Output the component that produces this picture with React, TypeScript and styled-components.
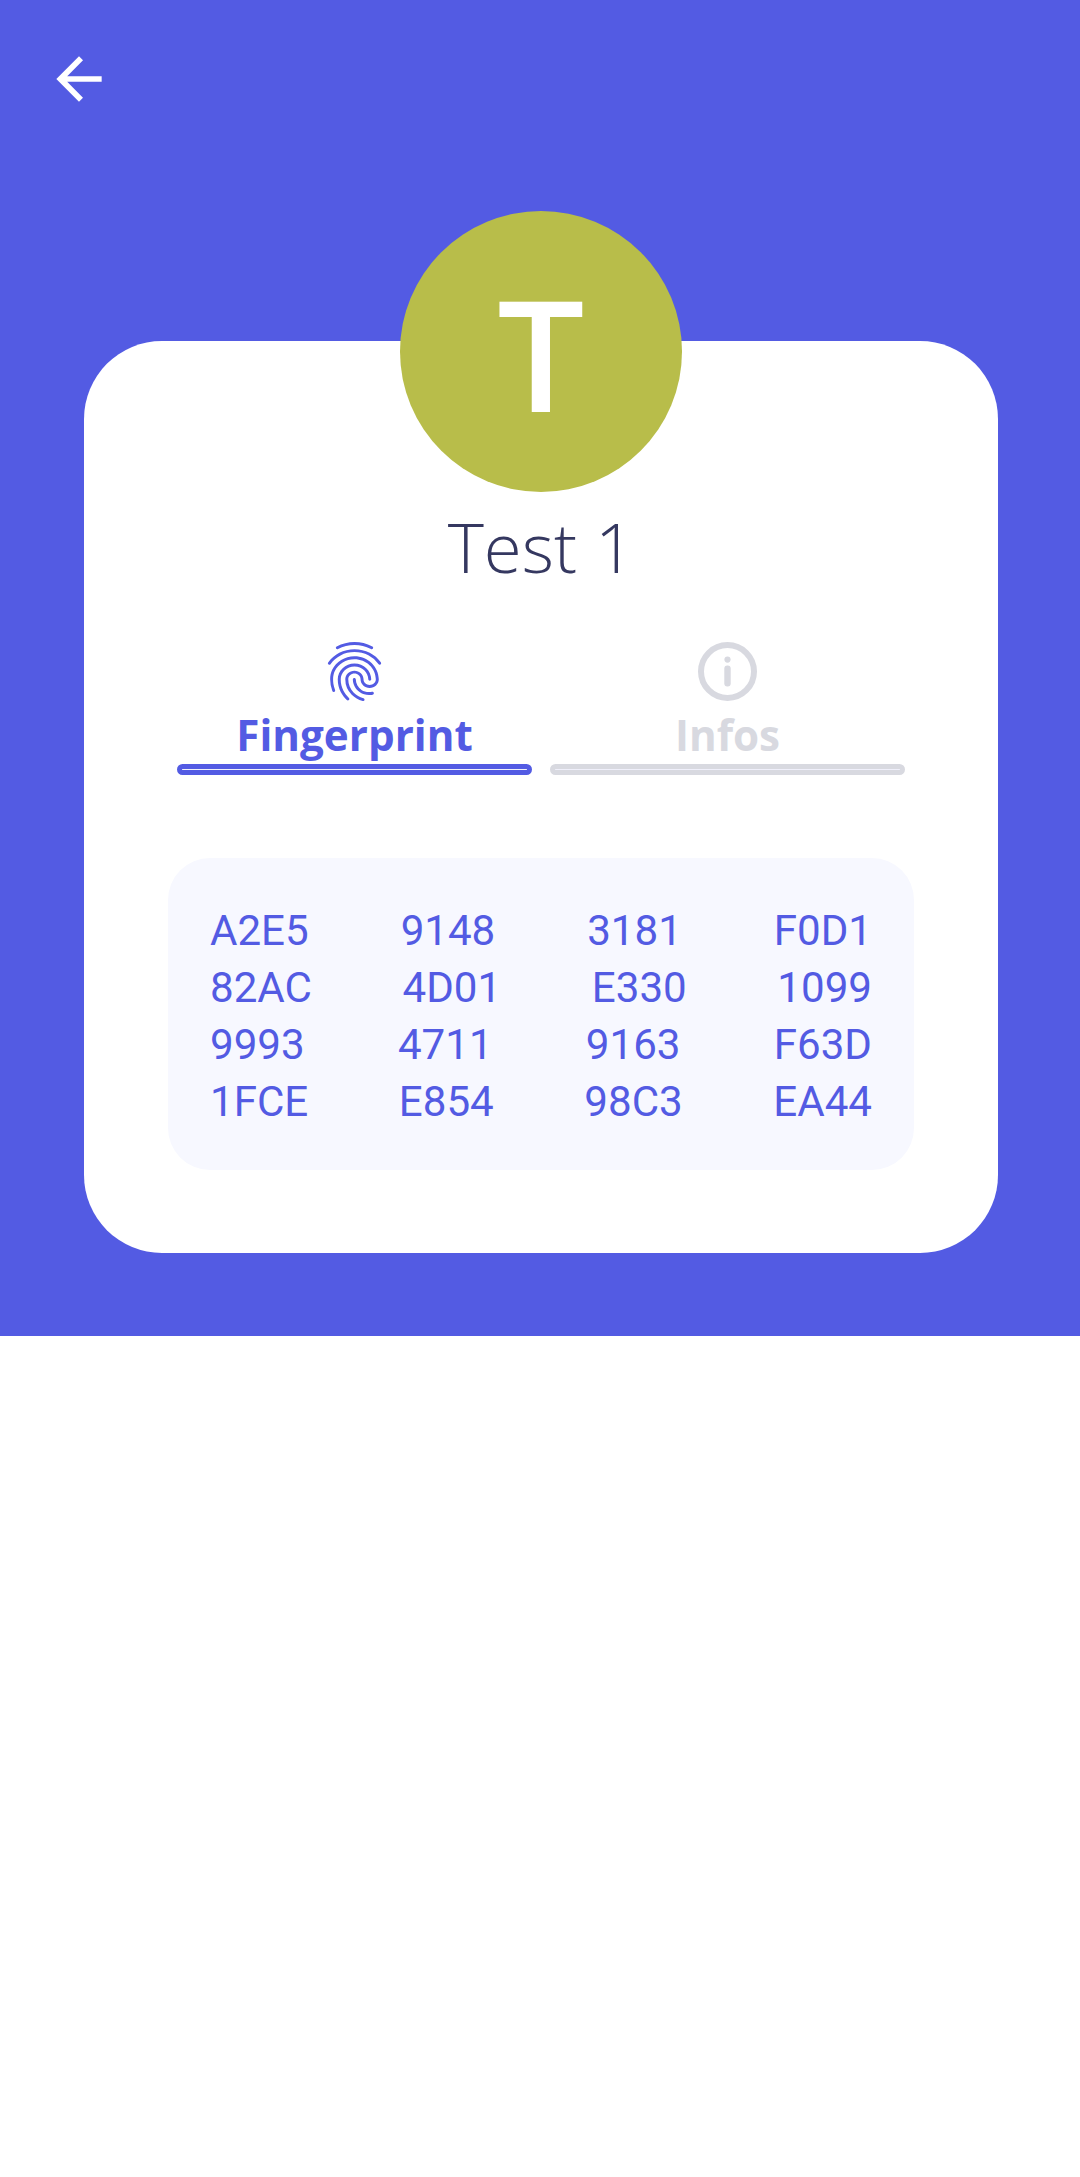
import React from "react";
import styled, { createGlobalStyle } from "styled-components";
import { MdArrowBack, MdFingerprint } from "react-icons/md";

const PRIMARY = "#535be3";
const MUTED = "#d8d9e0";

const GlobalStyle = createGlobalStyle`
  *, *::before, *::after { box-sizing: border-box; }
  body { margin: 0; background: #ffffff; font-family: "Open Sans", sans-serif; }
`;

const Page = styled.main`
  width: 1080px;
  min-height: 2177px;
  background: #ffffff;
`;

const Hero = styled.section`
  height: 1336px;
  padding: 45px 82px 83px 84px;
  background: ${PRIMARY};
  display: flex;
  flex-direction: column;
`;

const BackButton = styled.button`
  display: flex;
  width: 68px;
  height: 68px;
  margin: 0 0 228px -39px;
  padding: 0;
  border: 0;
  background: none;
  color: #ffffff;
`;

const Card = styled.article`
  flex: 1;
  display: flex;
  flex-direction: column;
  align-items: center;
  padding: 0 84px;
  border-radius: 78px;
  background: #ffffff;
`;

const Avatar = styled.div`
  display: flex;
  align-items: center;
  justify-content: center;
  width: 282px;
  height: 281px;
  margin-top: -130px;
  padding-top: 2px;
  flex: none;
  border-radius: 50%;
  background: #b8bd4a;
  color: #ffffff;
  font-size: 154.5px;
  font-weight: 600;
  line-height: 279px;
`;

const Name = styled.h1`
  margin: 7px 0 0;
  height: 94px;
  color: #353860;
  font-size: 69px;
  font-weight: 300;
  line-height: 94px;
`;

const Tabs = styled.div`
  display: flex;
  gap: 18px;
  width: 728px;
  margin-top: 43px;
`;

const Tab = styled.button<{ $active?: boolean }>`
  flex: 1;
  display: flex;
  flex-direction: column;
  align-items: center;
  padding: 0;
  border: 0;
  background: none;
  color: ${(p) => (p.$active ? PRIMARY : MUTED)};
  font: 700 42.2px/57px "Open Sans", sans-serif;
`;

const IconSlot = styled.span`
  display: flex;
  align-items: center;
  justify-content: center;
  height: 70px;
`;

const TabLabel = styled.span`
  height: 58px;
`;

const TabBar = styled.span`
  width: 100%;
  height: 11px;
  border: 5px solid currentColor;
  border-radius: 5.5px;
  background: #f0f0fb;
`;

const FingerprintBox = styled.div`
  width: 746px;
  height: 312px;
  margin-top: 83px;
  padding: 44px 42px 40px;
  border-radius: 42px;
  background: #f7f8ff;
`;

const CodeRow = styled.div`
  display: flex;
  justify-content: space-between;
  color: ${PRIMARY};
  font: 400 42.1px/57px Roboto, sans-serif;
`;

const rows = [
  ["A2E5", "9148", "3181", "F0D1"],
  ["82AC", "4D01", "E330", "1099"],
  ["9993", "4711", "9163", "F63D"],
  ["1FCE", "E854", "98C3", "EA44"],
];

const InfoIcon = () => (
  <svg width="59" height="59" viewBox="0 0 59 59" fill="currentColor">
    <circle cx="29.5" cy="29.5" r="26.5" fill="none" stroke="currentColor" strokeWidth="6" />
    <circle cx="29.5" cy="17.6" r="3.1" />
    <rect x="26.3" y="23.5" width="6.4" height="21" rx="3" />
  </svg>
);

export default function App() {
  return (
    <Page>
      <GlobalStyle />
      <Hero>
        <BackButton aria-label="Back">
          <MdArrowBack size={68} />
        </BackButton>
        <Card>
          <Avatar>T</Avatar>
          <Name>Test 1</Name>
          <Tabs>
            <Tab $active>
              <IconSlot>
                <MdFingerprint size={71} />
              </IconSlot>
              <TabLabel>Fingerprint</TabLabel>
              <TabBar />
            </Tab>
            <Tab>
              <IconSlot>
                <InfoIcon />
              </IconSlot>
              <TabLabel>Infos</TabLabel>
              <TabBar />
            </Tab>
          </Tabs>
          <FingerprintBox>
            {rows.map((row) => (
              <CodeRow key={row[0]}>
                {row.map((part) => (
                  <span key={part}>{part}</span>
                ))}
              </CodeRow>
            ))}
          </FingerprintBox>
        </Card>
      </Hero>
    </Page>
  );
}
